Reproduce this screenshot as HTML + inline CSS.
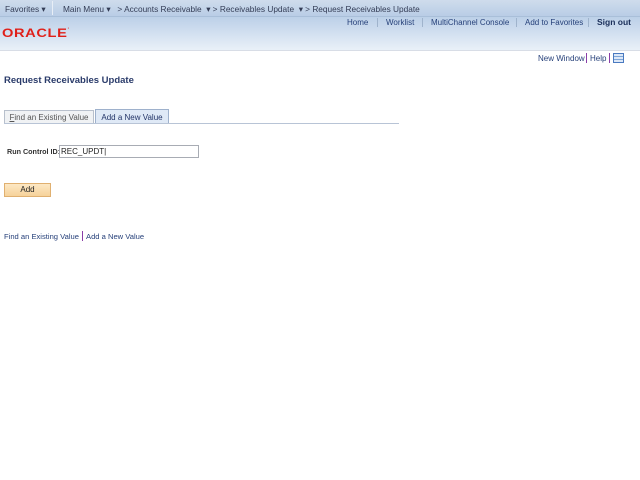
<!DOCTYPE html>
<html><head><style>
body{margin:0;width:640px;height:480px;background:#fff;font-family:"Liberation Sans",Arial,sans-serif;font-size:8px;position:relative;overflow:hidden}
.a{position:absolute;white-space:nowrap}
#nav{position:absolute;left:0;top:0;width:640px;height:16px;background:linear-gradient(#cfdcec,#b9cde6);border-bottom:1px solid #a9bfd9}
#hdr{position:absolute;left:0;top:17px;width:640px;height:33px;background:linear-gradient(#bcd0e8,#e9f0f8);border-bottom:1px solid #d8dde6}
.n{color:#333c55;font-size:8.3px;top:4px}
.h{color:#27417a;font-size:8px;top:18px}
.sep{position:absolute;width:1px;background:#9fb3cc}
</style></head><body>
<div id="nav"></div><div id="hdr"></div>
<div class="a n" style="left:5px">Favorites ▾</div>
<div class="sep" style="left:52px;top:1px;height:14px;background:#e8eef6"></div>
<div class="a n" style="left:63px">Main Menu ▾ &nbsp;&nbsp;&gt; Accounts Receivable &nbsp;▾ &gt; Receivables Update &nbsp;▾ &gt; Request Receivables Update</div>
<div class="a h" style="left:347px">Home</div>
<div class="sep" style="left:377px;top:18px;height:9px"></div>
<div class="a h" style="left:386px">Worklist</div>
<div class="sep" style="left:422px;top:18px;height:9px"></div>
<div class="a h" style="left:431px">MultiChannel Console</div>
<div class="sep" style="left:516px;top:18px;height:9px"></div>
<div class="a h" style="left:525px">Add to Favorites</div>
<div class="sep" style="left:588px;top:18px;height:9px"></div>
<div class="a h" style="left:597px;font-weight:bold;font-size:8.5px;top:17px;color:#1b2f5a">Sign out</div>
<div class="a" style="left:2px;top:26px;color:#e0201a;font-size:12px;font-weight:bold;letter-spacing:0.5px;transform:scaleX(1.22);transform-origin:left">ORACLE<span style="font-size:5px;vertical-align:top">·</span></div>
<div class="a" style="left:538px;top:54px;color:#27417a">New Window</div>
<div class="sep" style="left:586px;top:53px;height:10px;background:#8a3ea8"></div>
<div class="a" style="left:590px;top:54px;color:#27417a">Help</div>
<div class="sep" style="left:609px;top:53px;height:10px;background:#8a3ea8"></div>
<div class="a" style="left:613px;top:53px;width:9px;height:8px;border:1px solid #4a7ac0;background:repeating-linear-gradient(#dce8f8 0 2px,#7fa6d8 2px 3px)"></div>
<div class="a" style="left:4px;top:75px;font-size:9.5px;font-weight:bold;color:#2a3b6a">Request Receivables Update</div>
<div class="a" style="left:4px;top:110px;width:88px;height:13px;border:1px solid #b8c0cc;border-bottom:none;background:#f0f2f4;color:#555;font-size:8px;line-height:13px;text-align:center"><u>F</u>ind an Existing Value</div>
<div class="a" style="left:95px;top:109px;width:72px;height:14px;border:1px solid #9eb1cc;border-bottom:none;background:#dfe9f6;color:#223366;font-size:8px;line-height:15px;text-align:center">Add a New Value</div>
<div class="a" style="left:4px;top:123px;width:395px;height:1px;background:#b8c4d6"></div>
<div class="a" style="left:7px;top:147px;font-weight:bold;color:#333;font-size:7.2px">Run Control ID:</div>
<div class="a" style="left:59px;top:145px;width:137px;height:11px;border:1px solid #a8acb4;font-size:8px;line-height:11px;padding-left:1px;color:#222">REC_UPDT|</div>
<div class="a" style="left:4px;top:183px;width:45px;height:12px;border:1px solid #e0b070;background:linear-gradient(#fde8c4,#f6d29a);text-align:center;line-height:12px;color:#222">Add</div>
<div class="a" style="left:4px;top:232px;color:#27417a;font-size:7.6px">Find an Existing Value</div>
<div class="sep" style="left:82px;top:231px;height:10px;background:#8a3ea8"></div>
<div class="a" style="left:86px;top:232px;color:#27417a;font-size:7.6px">Add a New Value</div>
</body></html>
